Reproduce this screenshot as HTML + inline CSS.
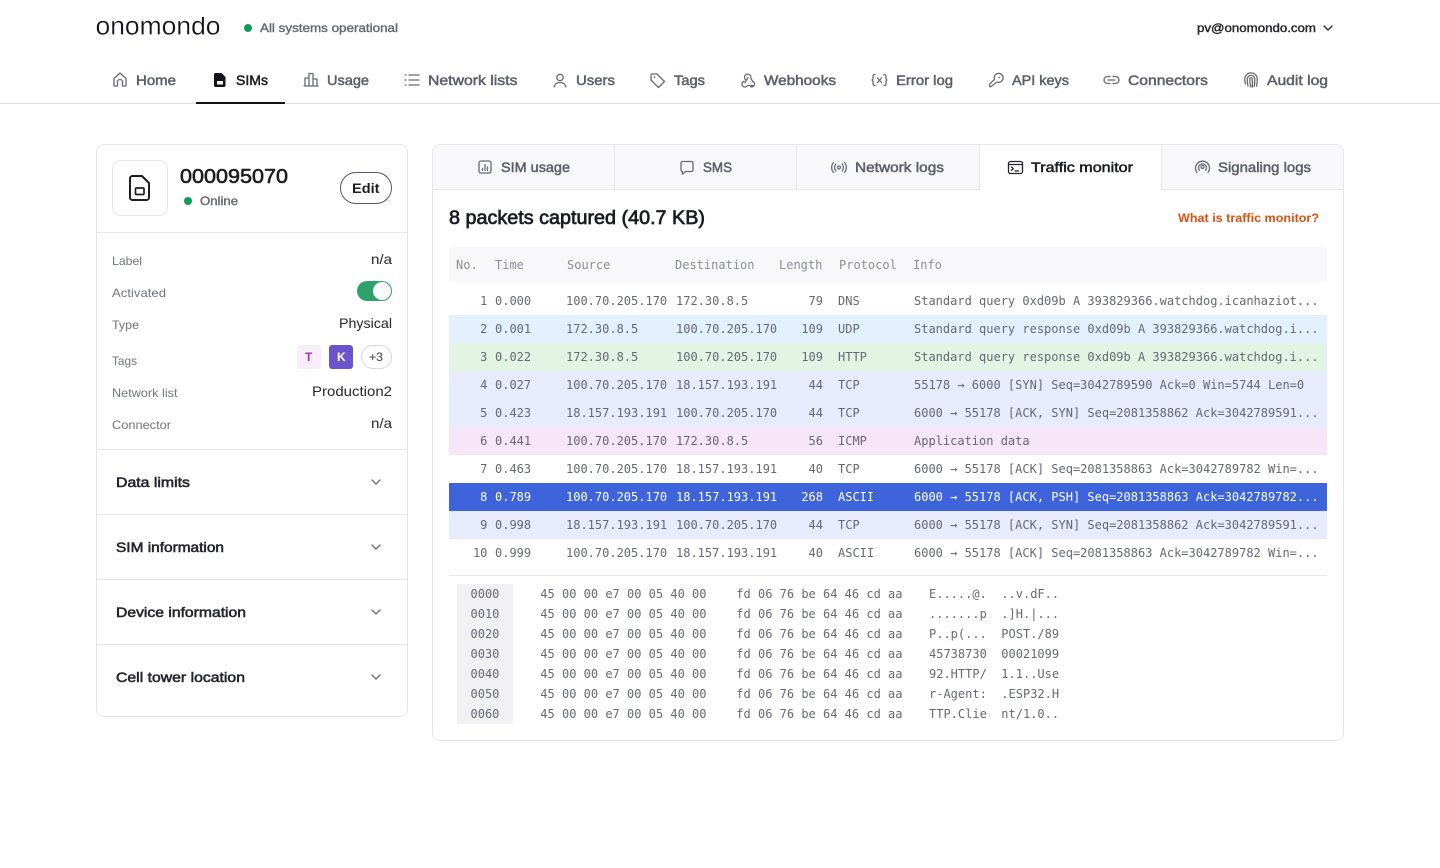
<!DOCTYPE html>
<html lang="en"><head><meta charset="utf-8"><title>Traffic monitor</title>
<style>
html,body{margin:0;padding:0;background:#fff;width:1440px;height:868px;overflow:hidden}
svg{display:block}
text{font-family:"Liberation Sans",sans-serif;white-space:pre}
.n{font-size:14px;fill:#5d5f6b;stroke:#5d5f6b;stroke-width:.5}
.a{fill:#1b1c24;stroke:#1b1c24}
.l{font-size:12px;fill:#71737f}
.v{font-size:14px;fill:#26272f}
.h{font-size:14px;fill:#24252d;stroke:#24252d;stroke-width:.55}
.t{font-family:"DejaVu Sans Mono","Liberation Mono",monospace;font-size:12px;fill:#666873}
.th{fill:#8b8d98}
.w{fill:#fff}
.i{fill:none;stroke:#686a76;stroke-width:1.3;stroke-linecap:round;stroke-linejoin:round}
.d{stroke:#24252d}
</style></head><body>
<svg width="1440" height="868" viewBox="0 0 1440 868" xmlns="http://www.w3.org/2000/svg">
<defs><clipPath id="lg"><rect x="90" y="17" width="140" height="22"/></clipPath></defs>
<rect width="1440" height="868" fill="#fff"/>

<!-- top bar -->
<g clip-path="url(#lg)"><text x="95.500" y="34.500" font-size="26" textLength="125" lengthAdjust="spacingAndGlyphs" fill="#14151c" stroke="#fff" stroke-width=".25">onomondo</text></g>
<circle cx="248" cy="28" r="4" fill="#0f9d58"/>
<text x="260" y="32" font-size="12" fill="#666874" stroke="#666874" stroke-width=".4" textLength="138" lengthAdjust="spacingAndGlyphs">All systems operational</text>
<text x="1197" y="32" font-size="12" fill="#24252d" stroke="#24252d" stroke-width=".4" textLength="119" lengthAdjust="spacingAndGlyphs">pv@onomondo.com</text>
<path class="i d" d="M1324 26l4 4 4-4" stroke-width="1.4"/>

<!-- nav -->
<rect x="0" y="103" width="1440" height="1" fill="#dcdde2"/>
<rect x="196" y="102" width="89" height="2" fill="#14151c"/>
<text class="n" x="136" y="85" textLength="40" lengthAdjust="spacingAndGlyphs">Home</text>
<text class="n a" x="236" y="85" textLength="32" lengthAdjust="spacingAndGlyphs">SIMs</text>
<text class="n" x="327" y="85" textLength="42" lengthAdjust="spacingAndGlyphs">Usage</text>
<text class="n" x="428" y="85" textLength="89.500" lengthAdjust="spacingAndGlyphs">Network lists</text>
<text class="n" x="576" y="85" textLength="39" lengthAdjust="spacingAndGlyphs">Users</text>
<text class="n" x="674" y="85" textLength="31" lengthAdjust="spacingAndGlyphs">Tags</text>
<text class="n" x="764" y="85" textLength="72" lengthAdjust="spacingAndGlyphs">Webhooks</text>
<text class="n" x="896" y="85" textLength="57" lengthAdjust="spacingAndGlyphs">Error log</text>
<text class="n" x="1012" y="85" textLength="57" lengthAdjust="spacingAndGlyphs">API keys</text>
<text class="n" x="1128" y="85" textLength="80" lengthAdjust="spacingAndGlyphs">Connectors</text>
<text class="n" x="1267" y="85" textLength="61" lengthAdjust="spacingAndGlyphs">Audit log</text>

<!-- nav icons -->
<path class="i" d="M114 86v-7.500l6-5.500 6 5.500v7.500h-3.500v-4a2.500 2.500 0 0 0-5 0v4z"/>
<path d="M215.500 73h6l4 4v8.500a1.500 1.500 0 0 1-1.500 1.500h-8.500a1.500 1.500 0 0 1-1.500-1.500v-11a1.500 1.500 0 0 1 1.500-1.500z" fill="#14151c"/><rect x="217" y="81" width="6" height="3.500" rx=".5" fill="#fff"/>
<path class="i" d="M305 86v-8h4v8zM309 86V73.500h4V86zM313 79h4v7h-4zM304 86h14"/>
<path class="i" d="M409 75h10M409 80h10M409 85h10M405 75h1M405 80h1M405 85h1" stroke-width="1.400"/>
<path class="i" d="M554 87c.8-3 3-4.500 6-4.500s5.200 1.500 6 4.500"/><circle class="i" cx="560" cy="77.500" r="3.200"/>
<path class="i" d="M651 75.500v4.500l7.500 7.500 6-6-7.500-7.500h-4.500a1.500 1.500 0 0 0-1.500 1.500z"/><circle cx="654.500" cy="77" r=".9" fill="#686a76"/>
<path class="i" d="M744.200 81.300A2.900 2.900 0 1 0 747.400 85.500h5.300M745.700 79.800a3.200 3.200 0 1 1 5.100-1.700l2 3.600M748 77.500l-3 5.500M752.400 81.200a2.900 2.900 0 1 1-1.800 5.500"/>
<path class="i" d="M875 74.500c-1.700 0-2 .8-2 2v1.500c0 1.300-.4 2-1 2 .6 0 1 .7 1 2v1.500c0 1.200.3 2 2 2M884 74.500c1.700 0 2 .8 2 2v1.500c0 1.300.4 2 1 2-.6 0-1 .7-1 2v1.500c0 1.200-.3 2-2 2M877.500 78l4 4.500M881.500 78l-4 4.500"/>
<path class="i" d="M997 82l-6.500 5-1-1 .1-2 4.900-4.500a4.500 4.500 0 1 1 2.500 2.500z"/><circle cx="999" cy="77.500" r=".9" fill="#686a76"/>
<path class="i" d="M1110 76.500h-2.500a3.500 3.500 0 0 0 0 7h2.500M1113 76.500h2.500a3.500 3.500 0 0 1 0 7H1113M1108 80h7"/>
<path class="i" d="M1245.500 84c-.5-1.500-.8-3-.8-4.800a6.300 6.300 0 0 1 12.600 0c0 2.800-.3 5-.8 7M1248 86c-.5-2-.8-4-.8-6.800a3.800 3.800 0 0 1 7.600 0c0 2.800-.1 5-.5 7.300M1251 87c-.9-2.500-1.300-5-1.300-7.800a1.300 1.300 0 0 1 2.600 0c0 2.800.1 5 .2 7.800" stroke-width="1.100"/>

<!-- left card -->
<rect x="96.500" y="144.500" width="311" height="572" rx="7.500" fill="#fff" stroke="#e6e6eb"/>
<rect x="112.500" y="160.500" width="55" height="55" rx="8" fill="#fff" stroke="#e6e6eb"/>
<path d="M132.500 176h9.500l7 7v14.500a2.500 2.500 0 0 1-2.500 2.500h-14a2.500 2.500 0 0 1-2.500-2.500v-19a2.500 2.500 0 0 1 2.500-2.500z" fill="none" stroke="#1b1c24" stroke-width="2" stroke-linejoin="round"/>
<rect x="135.500" y="188" width="8.500" height="6.500" rx="1" fill="none" stroke="#1b1c24" stroke-width="1.700"/>
<text x="180" y="183" font-size="20" fill="#1b1c24" stroke="#1b1c24" stroke-width=".6" textLength="108" lengthAdjust="spacingAndGlyphs">000095070</text>
<circle cx="188" cy="201" r="4" fill="#0f9d58"/>
<text x="200" y="205" font-size="12" fill="#666874" stroke="#666874" stroke-width=".4" textLength="38" lengthAdjust="spacingAndGlyphs">Online</text>
<rect x="340.500" y="172.500" width="51" height="31" rx="15.500" fill="#fff" stroke="#55565f"/>
<text x="352" y="193" font-size="14" font-weight="700" fill="#1b1c24" textLength="27.500" lengthAdjust="spacingAndGlyphs">Edit</text>
<rect x="97" y="232" width="310" height="1" fill="#e6e6eb"/>

<text class="l" x="112" y="265" textLength="30" lengthAdjust="spacingAndGlyphs">Label</text>
<text class="l" x="112" y="297" textLength="54" lengthAdjust="spacingAndGlyphs">Activated</text>
<text class="l" x="112" y="329" textLength="27" lengthAdjust="spacingAndGlyphs">Type</text>
<text class="l" x="112" y="365" textLength="25" lengthAdjust="spacingAndGlyphs">Tags</text>
<text class="l" x="112" y="397" textLength="65.500" lengthAdjust="spacingAndGlyphs">Network list</text>
<text class="l" x="112" y="429" textLength="59" lengthAdjust="spacingAndGlyphs">Connector</text>

<text class="v" x="371" y="264" textLength="21" lengthAdjust="spacingAndGlyphs">n/a</text>
<rect x="357" y="281" width="35" height="20" rx="10" fill="#2fa26c"/>
<circle cx="382" cy="291" r="9" fill="#fbfbfb"/>
<text class="v" x="339" y="328" textLength="53" lengthAdjust="spacingAndGlyphs">Physical</text>
<rect x="297" y="345" width="24" height="24" rx="3" fill="#f8ecfa"/>
<text x="305" y="361" font-size="12" font-weight="700" fill="#a635b8">T</text>
<rect x="329" y="345" width="24" height="24" rx="3" fill="#6b55cf"/>
<text x="337" y="361" font-size="12" font-weight="700" fill="#fff">K</text>
<rect x="361.500" y="345.500" width="30" height="23" rx="11.500" fill="#fff" stroke="#d8d8de"/>
<text x="369" y="361" font-size="12" fill="#55565f" stroke="#55565f" stroke-width=".2" textLength="14" lengthAdjust="spacingAndGlyphs">+3</text>
<text class="v" x="312" y="396" textLength="80" lengthAdjust="spacingAndGlyphs">Production2</text>
<text class="v" x="371" y="428" textLength="21" lengthAdjust="spacingAndGlyphs">n/a</text>

<rect x="97" y="449" width="310" height="1" fill="#e6e6eb"/>
<rect x="97" y="514" width="310" height="1" fill="#e6e6eb"/>
<rect x="97" y="579" width="310" height="1" fill="#e6e6eb"/>
<rect x="97" y="644" width="310" height="1" fill="#e6e6eb"/>
<text class="h" x="116" y="487" textLength="74" lengthAdjust="spacingAndGlyphs">Data limits</text>
<text class="h" x="116" y="552" textLength="108" lengthAdjust="spacingAndGlyphs">SIM information</text>
<text class="h" x="116" y="617" textLength="130" lengthAdjust="spacingAndGlyphs">Device information</text>
<text class="h" x="116" y="682" textLength="129" lengthAdjust="spacingAndGlyphs">Cell tower location</text>
<path class="i" d="M372 480l4 4 4-4M372 545l4 4 4-4M372 610l4 4 4-4M372 675l4 4 4-4" stroke-width="1.400"/>

<!-- right card -->
<rect x="432.500" y="144.500" width="911" height="596" rx="7.500" fill="#fff" stroke="#e6e6eb"/>
<path d="M433 189V152.500a7.500 7.500 0 0 1 7.500-7.500H979V189zM1162 145h174.500a7 7 0 0 1 6.500 7V189H1162z" fill="#f8f8fa"/>
<rect x="433" y="189" width="546" height="1" fill="#e6e6eb"/>
<rect x="1161" y="189" width="182" height="1" fill="#e6e6eb"/>
<rect x="614" y="145" width="1" height="44" fill="#e6e6eb"/>
<rect x="796" y="145" width="1" height="44" fill="#e6e6eb"/>
<rect x="979" y="145" width="1" height="45" fill="#e6e6eb"/>
<rect x="1161" y="145" width="1" height="45" fill="#e6e6eb"/>
<text class="n" x="501" y="172" textLength="69" lengthAdjust="spacingAndGlyphs">SIM usage</text>
<text class="n" x="703" y="172" textLength="29" lengthAdjust="spacingAndGlyphs">SMS</text>
<text class="n" x="855" y="172" textLength="89" lengthAdjust="spacingAndGlyphs">Network logs</text>
<text class="n a" x="1031" y="172" textLength="102" lengthAdjust="spacingAndGlyphs">Traffic monitor</text>
<text class="n" x="1218" y="172" textLength="93" lengthAdjust="spacingAndGlyphs">Signaling logs</text>
<!-- tab icons -->
<rect class="i" x="479" y="161" width="12" height="12" rx="2"/><path class="i" d="M482.500 170.500v-2M485 170.500v-6M487.500 170.500v-3.500"/>
<path class="i" d="M682.500 161.500h9a1.500 1.500 0 0 1 1.500 1.500v7a1.500 1.500 0 0 1-1.500 1.500h-6l-3 2.500v-2.500a1.500 1.500 0 0 1-1.500-1.500v-7a1.500 1.500 0 0 1 1.500-1.500z"/>
<circle cx="839" cy="167.500" r="1.500" fill="none" stroke="#686a76" stroke-width="1.200"/>
<path class="i" d="M835.800 164c-1.600 2-1.600 5 0 7M842.200 164c1.600 2 1.600 5 0 7M833.500 162.500c-2.500 3-2.500 7 0 10M844.500 162.500c2.500 3 2.500 7 0 10" stroke-width="1.100"/>
<rect class="i d" x="1008.500" y="161.500" width="14" height="12" rx="2"/><path class="i d" d="M1008.500 164.500h14M1011.500 167l1.800 1.700-1.800 1.700M1015 171h3.500"/>
<path class="i" d="M1197 172.500a7 7 0 1 1 11 0M1199.500 170.500a4 4 0 1 1 6 0"/><circle class="i" cx="1202.500" cy="167" r="1.500"/>

<text x="449" y="224" font-size="19" fill="#1b1c24" stroke="#1b1c24" stroke-width=".7" textLength="256" lengthAdjust="spacingAndGlyphs">8 packets captured (40.7 KB)</text>
<text x="1178" y="222" font-size="12" font-weight="700" fill="#d9500f" textLength="141" lengthAdjust="spacingAndGlyphs">What is traffic monitor?</text>

<!-- table -->
<rect x="449" y="247" width="878" height="36" rx="4" fill="#f8f8fa"/>
<text class="t th" x="456" y="269">No.</text>
<text class="t th" x="495" y="269">Time</text>
<text class="t th" x="567" y="269">Source</text>
<text class="t th" x="675" y="269">Destination</text>
<text class="t th" x="779" y="269">Length</text>
<text class="t th" x="839" y="269">Protocol</text>
<text class="t th" x="913" y="269">Info</text>

<rect x="449" y="315" width="878" height="28" fill="#e3f1fe"/>
<rect x="449" y="343" width="878" height="28" fill="#e2f5e4"/>
<rect x="449" y="371" width="878" height="56" fill="#e8ebfb"/>
<rect x="449" y="427" width="878" height="28" fill="#f7e6f8"/>
<rect x="449" y="483" width="878" height="28" fill="#3d64da"/>
<rect x="449" y="511" width="878" height="28" fill="#e8ebfb"/>

<g class="rows">
<text class="t" x="487.400" y="305" text-anchor="end">1</text><text class="t" x="495" y="305">0.000</text><text class="t" x="566" y="305">100.70.205.170</text><text class="t" x="676" y="305">172.30.8.5</text><text class="t" x="823" y="305" text-anchor="end">79</text><text class="t" x="838" y="305">DNS</text><text class="t" x="914" y="305">Standard query 0xd09b A 393829366.watchdog.icanhaziot...</text>
<text class="t" x="487.400" y="333" text-anchor="end">2</text><text class="t" x="495" y="333">0.001</text><text class="t" x="566" y="333">172.30.8.5</text><text class="t" x="676" y="333">100.70.205.170</text><text class="t" x="823" y="333" text-anchor="end">109</text><text class="t" x="838" y="333">UDP</text><text class="t" x="914" y="333">Standard query response 0xd09b A 393829366.watchdog.i...</text>
<text class="t" x="487.400" y="361" text-anchor="end">3</text><text class="t" x="495" y="361">0.022</text><text class="t" x="566" y="361">172.30.8.5</text><text class="t" x="676" y="361">100.70.205.170</text><text class="t" x="823" y="361" text-anchor="end">109</text><text class="t" x="838" y="361">HTTP</text><text class="t" x="914" y="361">Standard query response 0xd09b A 393829366.watchdog.i...</text>
<text class="t" x="487.400" y="389" text-anchor="end">4</text><text class="t" x="495" y="389">0.027</text><text class="t" x="566" y="389">100.70.205.170</text><text class="t" x="676" y="389">18.157.193.191</text><text class="t" x="823" y="389" text-anchor="end">44</text><text class="t" x="838" y="389">TCP</text><text class="t" x="914" y="389">55178 → 6000 [SYN] Seq=3042789590 Ack=0 Win=5744 Len=0</text>
<text class="t" x="487.400" y="417" text-anchor="end">5</text><text class="t" x="495" y="417">0.423</text><text class="t" x="566" y="417">18.157.193.191</text><text class="t" x="676" y="417">100.70.205.170</text><text class="t" x="823" y="417" text-anchor="end">44</text><text class="t" x="838" y="417">TCP</text><text class="t" x="914" y="417">6000 → 55178 [ACK, SYN] Seq=2081358862 Ack=3042789591...</text>
<text class="t" x="487.400" y="445" text-anchor="end">6</text><text class="t" x="495" y="445">0.441</text><text class="t" x="566" y="445">100.70.205.170</text><text class="t" x="676" y="445">172.30.8.5</text><text class="t" x="823" y="445" text-anchor="end">56</text><text class="t" x="838" y="445">ICMP</text><text class="t" x="914" y="445">Application data</text>
<text class="t" x="487.400" y="473" text-anchor="end">7</text><text class="t" x="495" y="473">0.463</text><text class="t" x="566" y="473">100.70.205.170</text><text class="t" x="676" y="473">18.157.193.191</text><text class="t" x="823" y="473" text-anchor="end">40</text><text class="t" x="838" y="473">TCP</text><text class="t" x="914" y="473">6000 → 55178 [ACK] Seq=2081358863 Ack=3042789782 Win=...</text>
<text class="t w" x="487.400" y="501" text-anchor="end">8</text><text class="t w" x="495" y="501">0.789</text><text class="t w" x="566" y="501">100.70.205.170</text><text class="t w" x="676" y="501">18.157.193.191</text><text class="t w" x="823" y="501" text-anchor="end">268</text><text class="t w" x="838" y="501">ASCII</text><text class="t w" x="914" y="501">6000 → 55178 [ACK, PSH] Seq=2081358863 Ack=3042789782...</text>
<text class="t" x="487.400" y="529" text-anchor="end">9</text><text class="t" x="495" y="529">0.998</text><text class="t" x="566" y="529">18.157.193.191</text><text class="t" x="676" y="529">100.70.205.170</text><text class="t" x="823" y="529" text-anchor="end">44</text><text class="t" x="838" y="529">TCP</text><text class="t" x="914" y="529">6000 → 55178 [ACK, SYN] Seq=2081358862 Ack=3042789591...</text>
<text class="t" x="487.400" y="557" text-anchor="end">10</text><text class="t" x="495" y="557">0.999</text><text class="t" x="566" y="557">100.70.205.170</text><text class="t" x="676" y="557">18.157.193.191</text><text class="t" x="823" y="557" text-anchor="end">40</text><text class="t" x="838" y="557">ASCII</text><text class="t" x="914" y="557">6000 → 55178 [ACK] Seq=2081358863 Ack=3042789782 Win=...</text>
</g>

<rect x="449" y="575" width="878" height="1" fill="#e6e6eb"/>

<!-- hex -->
<rect x="457" y="584" width="56" height="140" fill="#f1f1f4"/>
<text class="t" x="470.500" y="598">0000</text><text class="t" x="540.300" y="598">45 00 00 e7 00 05 40 00</text><text class="t" x="736.300" y="598">fd 06 76 be 64 46 cd aa</text><text class="t" x="929" y="598">E.....@.</text><text class="t" x="1001.300" y="598">..v.dF..</text>
<text class="t" x="470.500" y="618">0010</text><text class="t" x="540.300" y="618">45 00 00 e7 00 05 40 00</text><text class="t" x="736.300" y="618">fd 06 76 be 64 46 cd aa</text><text class="t" x="929" y="618">.......p</text><text class="t" x="1001.300" y="618">.]H.|...</text>
<text class="t" x="470.500" y="638">0020</text><text class="t" x="540.300" y="638">45 00 00 e7 00 05 40 00</text><text class="t" x="736.300" y="638">fd 06 76 be 64 46 cd aa</text><text class="t" x="929" y="638">P..p(...</text><text class="t" x="1001.300" y="638">POST./89</text>
<text class="t" x="470.500" y="658">0030</text><text class="t" x="540.300" y="658">45 00 00 e7 00 05 40 00</text><text class="t" x="736.300" y="658">fd 06 76 be 64 46 cd aa</text><text class="t" x="929" y="658">45738730</text><text class="t" x="1001.300" y="658">00021099</text>
<text class="t" x="470.500" y="678">0040</text><text class="t" x="540.300" y="678">45 00 00 e7 00 05 40 00</text><text class="t" x="736.300" y="678">fd 06 76 be 64 46 cd aa</text><text class="t" x="929" y="678">92.HTTP/</text><text class="t" x="1001.300" y="678">1.1..Use</text>
<text class="t" x="470.500" y="698">0050</text><text class="t" x="540.300" y="698">45 00 00 e7 00 05 40 00</text><text class="t" x="736.300" y="698">fd 06 76 be 64 46 cd aa</text><text class="t" x="929" y="698">r-Agent:</text><text class="t" x="1001.300" y="698">.ESP32.H</text>
<text class="t" x="470.500" y="718">0060</text><text class="t" x="540.300" y="718">45 00 00 e7 00 05 40 00</text><text class="t" x="736.300" y="718">fd 06 76 be 64 46 cd aa</text><text class="t" x="929" y="718">TTP.Clie</text><text class="t" x="1001.300" y="718">nt/1.0..</text>
</svg>
</body></html>
